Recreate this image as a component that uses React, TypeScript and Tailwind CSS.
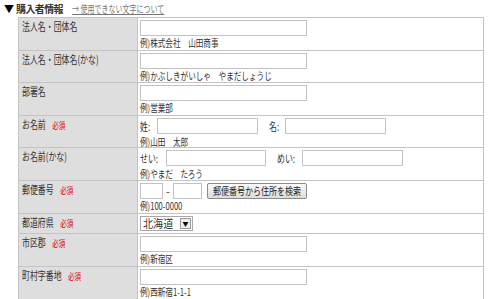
import React from "react";

const FONT = { fontFamily: '"Noto Sans CJK JP", "Noto Sans", sans-serif' };

// the reference text is set narrow (bitmap gothic), so glyphs are squeezed sideways
function Label({ children }: { children: React.ReactNode }) {
  return (
    <span className="inline-block origin-left scale-x-[0.72] whitespace-nowrap">{children}</span>
  );
}

function Req() {
  return <span className="ml-[9px] text-[9px] text-[#e00000]">必須</span>;
}

function Input({ w }: { w: number }) {
  return (
    <div
      className="h-[16px] shrink-0 border border-[#c2c2c2] bg-white"
      style={{ width: w }}
    />
  );
}

function Hint({ children }: { children: React.ReactNode }) {
  return (
    <div className="whitespace-nowrap text-[10px] leading-[14px] text-[#333]">
      <span className="inline-block origin-left scale-x-[0.76]">{children}</span>
    </div>
  );
}

function Row({
  label,
  req,
  h,
  children,
}: {
  label: string;
  req?: boolean;
  h: string;
  children: React.ReactNode;
}) {
  return (
    <div className={`flex overflow-hidden border-b border-[#c4c4c4] ${h}`}>
      <div className="w-[119px] shrink-0 border-r border-[#c4c4c4] bg-[#dedede] pl-[3px] pt-[1px] text-[11px] leading-[14px] text-[#333]">
        <Label>
          {label}
          {req ? <Req /> : null}
        </Label>
      </div>
      <div className="flex-1 pl-[2px] pt-[2px]">{children}</div>
    </div>
  );
}

export default function App() {
  return (
    <div className="h-[299px] w-[500px] overflow-hidden bg-white text-[#333]" style={FONT}>
      <div className="flex h-[17px] items-center whitespace-nowrap pl-[4px] text-[11px]">
        <span className="text-[10px] text-black">▼</span>
        <span className="ml-[2px] text-[10px] font-bold tracking-[-0.6px]">購入者情報</span>
        <span className="ml-[9px] inline-block origin-left scale-x-[0.7] text-[10px] text-[#777] underline">
          → 使用できない文字について
        </span>
      </div>
      <div className="ml-[18px] w-[466px] border-x border-t border-[#c4c4c4]">
        <Row label="法人名・団体名" h="h-[33px]">
          <Input w={167} />
          <Hint>例)株式会社　山田商事</Hint>
        </Row>
        <Row label="法人名・団体名(かな)" h="h-[32px]">
          <Input w={167} />
          <Hint>例)かぶしきがいしゃ　やまだしょうじ</Hint>
        </Row>
        <Row label="部署名" h="h-[33px]">
          <Input w={167} />
          <Hint>例)営業部</Hint>
        </Row>
        <Row label="お名前" req h="h-[32px]">
          <div className="flex items-center whitespace-nowrap text-[11px]">
            <span className="w-[17px]">
              <Label>姓:</Label>
            </span>
            <Input w={101} />
            <span className="ml-[11px] w-[16px]">
              <Label>名:</Label>
            </span>
            <Input w={101} />
          </div>
          <Hint>例)山田　太郎</Hint>
        </Row>
        <Row label="お名前(かな)" h="h-[33px]">
          <div className="flex items-center whitespace-nowrap text-[11px]">
            <span className="w-[26px]">
              <Label>せい:</Label>
            </span>
            <Input w={100} />
            <span className="ml-[11px] w-[25px]">
              <Label>めい:</Label>
            </span>
            <Input w={101} />
          </div>
          <Hint>例)やまだ　たろう</Hint>
        </Row>
        <Row label="郵便番号" req h="h-[33px]">
          <div className="flex items-center">
            <Input w={23} />
            <span className="w-[10px] text-center text-[11px] leading-[14px]">-</span>
            <Input w={29} />
            <button className="ml-[5px] flex h-[16px] w-[100px] items-center justify-center overflow-visible rounded-[2px] border border-[#8a8a8a] bg-gradient-to-b from-[#fafafa] to-[#dcdcdc] text-[10px] leading-[14px] text-[#222]">
              <span className="inline-block shrink-0 origin-center scale-x-[0.8] whitespace-nowrap">
                郵便番号から住所を検索
              </span>
            </button>
          </div>
          <Hint>例)100-0000</Hint>
        </Row>
        <Row label="都道府県" req h="h-[20px]">
          <div className="flex h-[15px] w-[53px] items-center justify-between border border-[#a8a8a8] bg-white pl-[2px] text-[11px] leading-[13px]">
            <span className="inline-block origin-left scale-x-[0.92] whitespace-nowrap">北海道</span>
            <span className="mr-[1px] flex h-[11px] w-[11px] items-center justify-center border border-[#9a9a9a] bg-[#eeeeee] text-[6px] text-black">▼</span>
          </div>
        </Row>
        <Row label="市区郡" req h="h-[33px]">
          <Input w={167} />
          <Hint>例)新宿区</Hint>
        </Row>
        <Row label="町村字番地" req h="h-[40px]">
          <Input w={167} />
          <Hint>例)西新宿1-1-1</Hint>
        </Row>
      </div>
    </div>
  );
}
